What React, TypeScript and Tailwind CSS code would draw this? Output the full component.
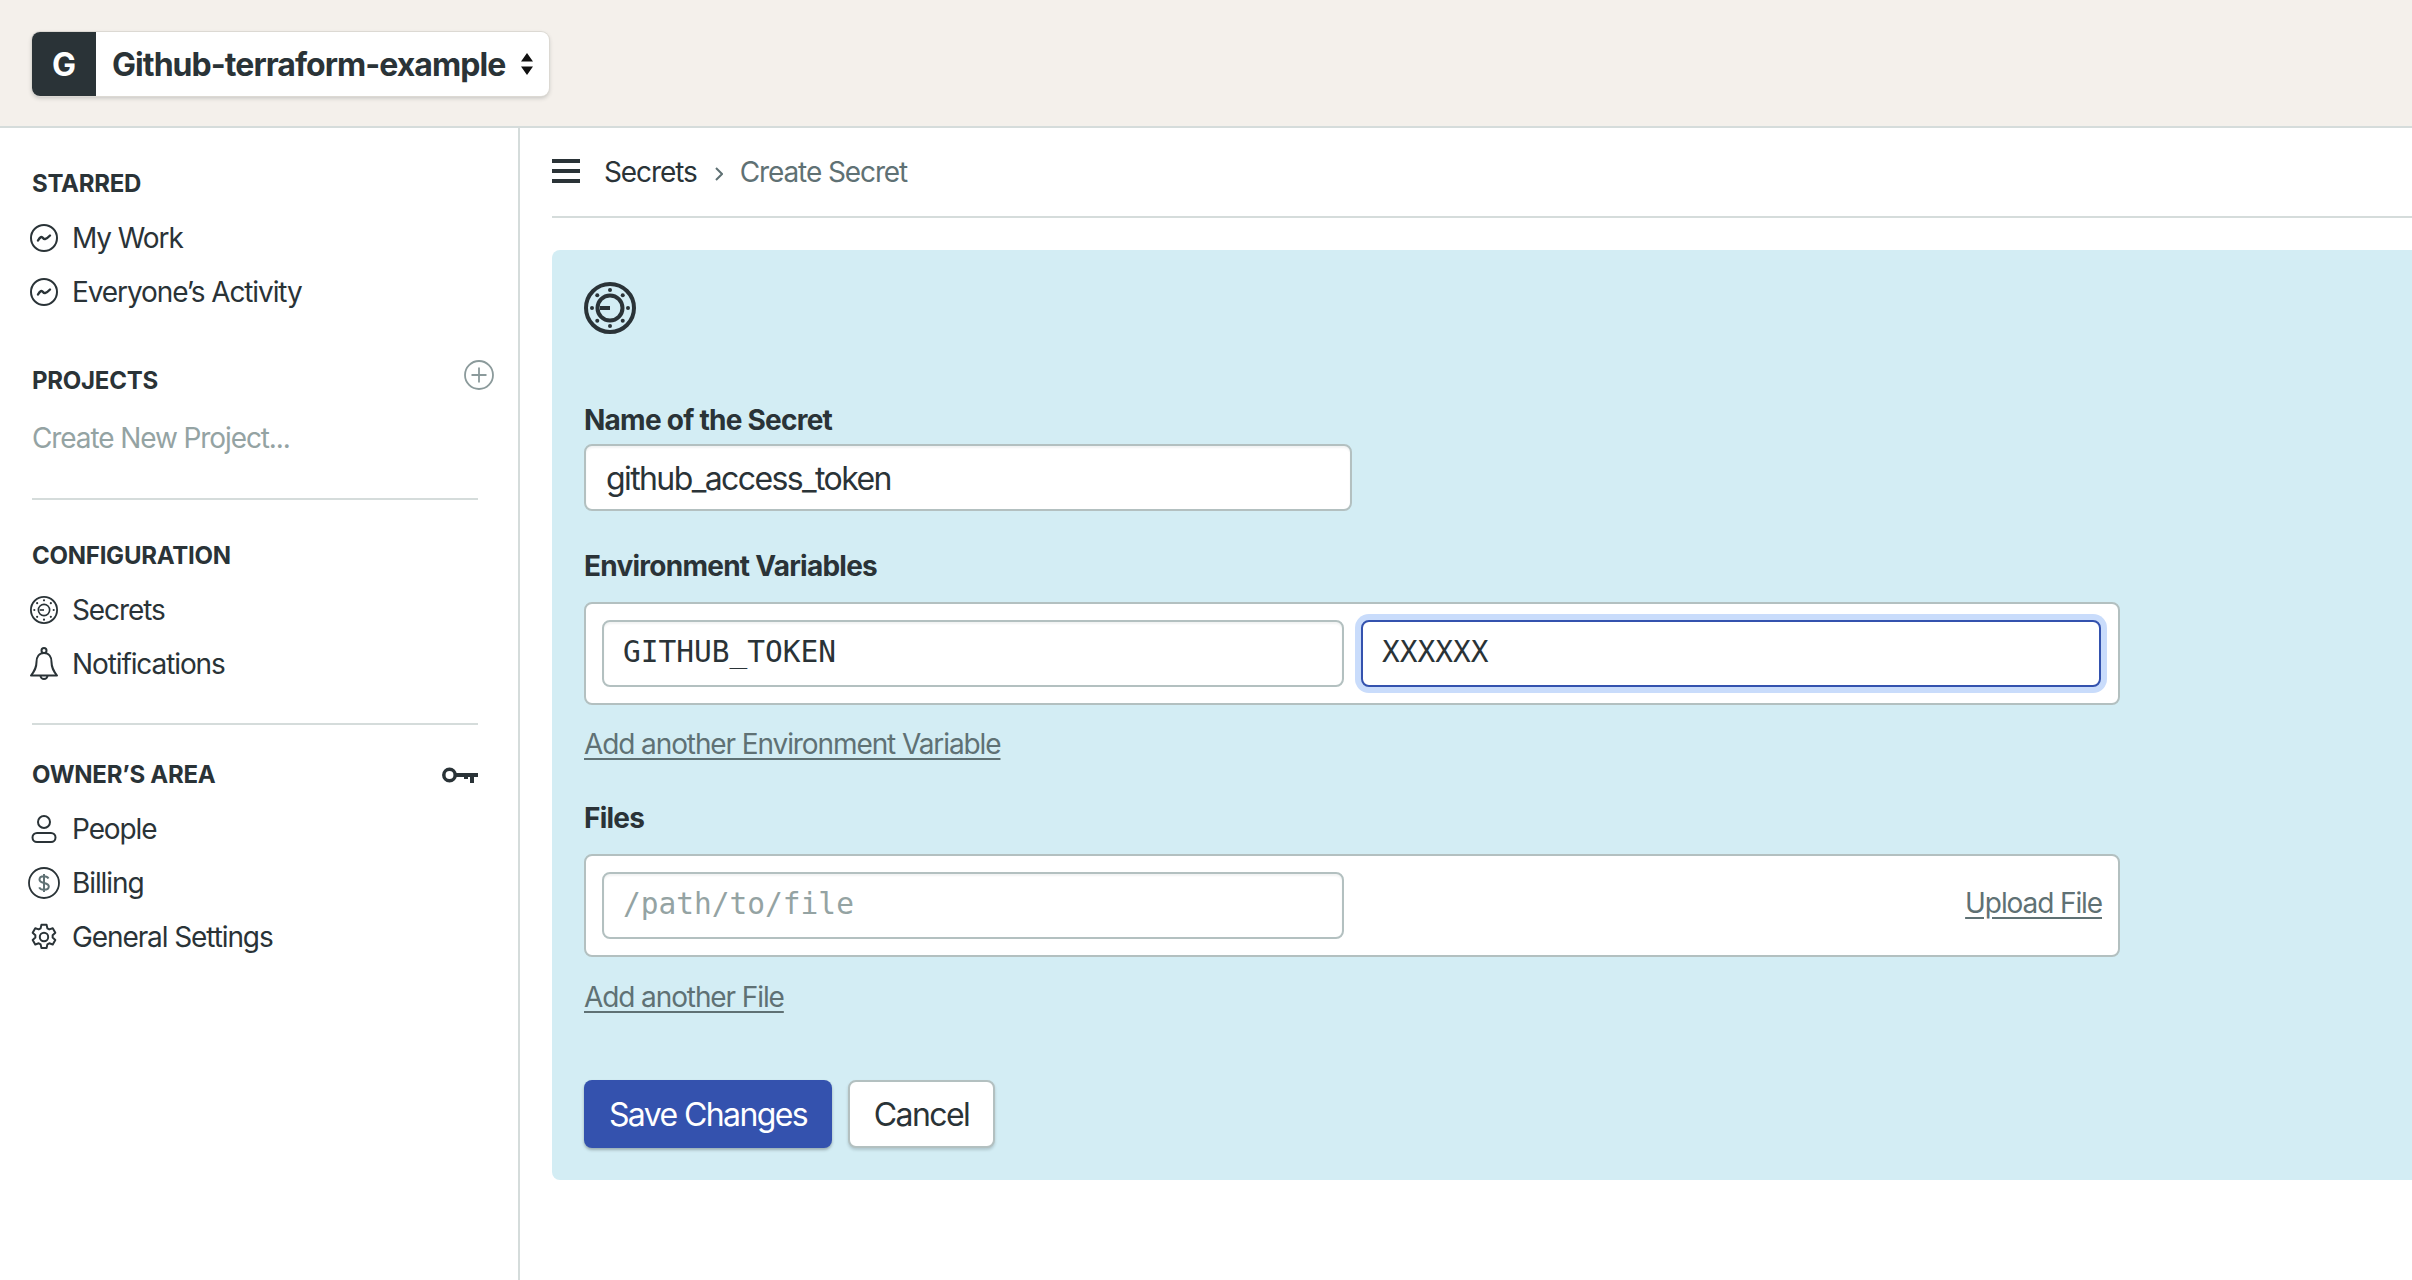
import { ReactNode } from "react";

const stroke = "#2a3337";

function Icon({ size = 28, children }: { size?: number; children: ReactNode }) {
  return (
    <svg width={size} height={size} viewBox="0 0 28 28" fill="none" stroke={stroke} strokeWidth="2" className="shrink-0">
      {children}
    </svg>
  );
}

function ActivityIcon() {
  return (
    <Icon>
      <circle cx="14" cy="14" r="13" />
      <path d="M8 16.500c2.300-4 3.700-4.300 5-2.500s3 1.600 7-2.500" strokeWidth="2.400" strokeLinecap="round" />
    </Icon>
  );
}

function SafeIcon({ size = 28 }: { size?: number }) {
  const small = size < 40;
  const dots = [0, 45, 90, 135, 180, 225, 270, 315];
  return (
    <svg width={size} height={size} viewBox="0 0 52 52" fill="none" stroke={stroke} strokeWidth={small ? 3.4 : 4} className="shrink-0">
      <circle cx="26" cy="26" r={small ? 24.300 : 24} />
      <circle cx="26" cy="26" r={small ? 10.500 : 12.500} strokeWidth={small ? 3 : 4} />
      <path d={small ? "M26 26h-8" : "M26 26h-10"} strokeWidth={small ? 3 : 4} />
      {dots.map((a) => (
        <circle
          key={a}
          cx={26 + 18 * Math.cos((a * Math.PI) / 180)}
          cy={26 + 18 * Math.sin((a * Math.PI) / 180)}
          r="2"
          fill={stroke}
          stroke="none"
        />
      ))}
    </svg>
  );
}

function BellIcon() {
  return (
    <svg width="28" height="34" viewBox="0 0 28 34" fill="none" stroke={stroke} strokeWidth="2" className="shrink-0">
      <circle cx="14" cy="3.500" r="2.500" />
      <path d="M14 6c-5 0-7.500 4-7.500 9 0 6-2 9-5.500 13.500h26c-3.500-4.500-5.500-7.500-5.500-13.500 0-5-2.500-9-7.500-9z" strokeLinejoin="round" />
      <path d="M10.500 28.500a3.500 3.500 0 0 0 7 0" />
    </svg>
  );
}

function PersonIcon() {
  return (
    <Icon>
      <circle cx="14" cy="7" r="6" />
      <rect x="2.500" y="18" width="23" height="9" rx="4.500" />
    </Icon>
  );
}

function BillingIcon() {
  return (
    <svg width="32" height="32" viewBox="0 0 32 32" fill="none" stroke={stroke} strokeWidth="1.800" className="shrink-0">
      <circle cx="16" cy="16" r="15" />
      <path d="M20.500 11.500c-.8-1.500-2.500-2.200-4.500-2.200-2.500 0-4.500 1.200-4.500 3.300 0 4.600 9.300 2.300 9.300 7 0 2.100-2.200 3.200-4.800 3.200-2.200 0-4-.8-4.800-2.400M16 7v18" stroke="#5f7174" strokeWidth="2" />
    </svg>
  );
}

function GearIcon() {
  return (
    <svg width="28" height="28" viewBox="0 0 24 24" fill="none" stroke={stroke} strokeWidth="1.700" strokeLinejoin="round" className="shrink-0">
      <path d="M9.800 1.500h4.400l.7 3.100 1.600.9 3-1 2.200 3.800-2.300 2.200v1.900l2.300 2.100-2.200 3.900-3-1-1.600.9-.7 3.100H9.800l-.7-3.100-1.600-.9-3 1-2.200-3.900 2.300-2.100v-1.900L2.300 8.300l2.200-3.800 3 1 1.600-.9z" />
      <circle cx="12" cy="12" r="3.600" />
    </svg>
  );
}

function KeyIcon() {
  return (
    <svg width="36" height="16" viewBox="0 0 36 16" fill="none" className="mt-[2px] shrink-0">
      <circle cx="7.500" cy="8" r="5.700" stroke={stroke} strokeWidth="3.500" />
      <path d="M14 6h22v4h-4v6h-4v-6h-2v2h-4v-2H14z" fill={stroke} />
    </svg>
  );
}

function SectionTitle({ children, className }: { children: ReactNode; className: string }) {
  return <h3 className={`h-7 text-[24px] leading-[30px] font-bold tracking-[-0.25px] text-[#2a3337] ${className}`}>{children}</h3>;
}

function NavItem({ icon, label }: { icon: ReactNode; label: string }) {
  return (
    <a className="flex h-[54px] items-center text-[28px] tracking-[-1.1px] text-[#2a3337]">
      <span className="-ml-[4px] mr-[3px] flex w-[41px] justify-center pr-[10px]">{icon}</span>
      {label}
    </a>
  );
}

function Sidebar() {
  return (
    <aside className="w-[520px] shrink-0 border-r-2 border-[#d5dcdb] pl-8 pr-[40px] pt-[41px]">
      <SectionTitle className="mb-[14px]">STARRED</SectionTitle>
      <NavItem icon={<ActivityIcon />} label="My Work" />
      <NavItem icon={<ActivityIcon />} label="Everyone’s Activity" />

      <div className="mt-[47px] flex items-start justify-between">
        <SectionTitle className="">PROJECTS</SectionTitle>
        <svg width="30" height="30" viewBox="0 0 30 30" fill="none" stroke="#8b9a9b" strokeWidth="1.800" className="-mr-[16px] -mt-[6px]">
          <circle cx="15" cy="15" r="14" />
          <path d="M15 7.500v15M7.500 15h15" />
        </svg>
      </div>
      <p className="mt-[17px] flex h-[54px] items-center text-[28px] tracking-[-1.1px] text-[#94a3a3]">Create New Project...</p>

      <div className="mt-[33px] h-0.5 bg-[#d5dcdb]" />

      <SectionTitle className="mt-[41px] mb-[14px]">CONFIGURATION</SectionTitle>
      <NavItem icon={<SafeIcon />} label="Secrets" />
      <NavItem icon={<BellIcon />} label="Notifications" />

      <div className="mt-[32px] h-0.5 bg-[#d5dcdb]" />

      <div className="mt-[35px] mb-[14px] flex items-center justify-between">
        <SectionTitle className="">OWNER’S AREA</SectionTitle>
        <KeyIcon />
      </div>
      <NavItem icon={<PersonIcon />} label="People" />
      <NavItem icon={<BillingIcon />} label="Billing" />
      <NavItem icon={<GearIcon />} label="General Settings" />
    </aside>
  );
}

const fieldClass =
  "h-[67px] rounded-lg border-2 border-[#b3c0c0] bg-white text-[#2a3337] outline-none shadow-[inset_0_2px_2px_rgba(42,51,55,0.06)]";
const monoClass = "px-[19px] pb-[3px] font-['DejaVu_Sans_Mono',monospace] text-[29.5px] placeholder:text-[#94a3a3]";

function FieldLabel({ children, className }: { children: ReactNode; className: string }) {
  return <label className={`block h-7 text-[28px] leading-7 font-bold tracking-[-0.75px] text-[#2a3337] ${className}`}>{children}</label>;
}

function TextLink({ children, className = "" }: { children: ReactNode; className?: string }) {
  return <a className={`text-[28px] leading-7 tracking-[-1.1px] text-[#5f7174] underline underline-offset-4 ${className}`}>{children}</a>;
}

function SecretForm() {
  return (
    <section className="mt-8 h-[930px] rounded-l-lg bg-[#d3edf4] pl-8 pt-8">
      <SafeIcon size={52} />

      <FieldLabel className="mt-[72px] mb-[10px]">Name of the Secret</FieldLabel>
      <input readOnly value="github_access_token" className={`${fieldClass} block w-[768px] px-5 pt-[2px] text-[32px] tracking-[-1.6px]`} />

      <FieldLabel className="mt-[41px] mb-[22px]">Environment Variables</FieldLabel>
      <div className="flex h-[103px] w-[1536px] items-center gap-[17px] rounded-lg border-2 border-[#b3c0c0] bg-white px-4">
        <input readOnly value="GITHUB_TOKEN" className={`${fieldClass} ${monoClass} w-[742px]`} />
        <input
          readOnly
          value="XXXXXX"
          className={`h-[67px] w-[740px] rounded-lg border-2 border-[#3452ae] bg-white text-[#2a3337] outline-none shadow-[0_0_0_6px_#c9dcfb] ${monoClass}`}
        />
      </div>
      <div className="mt-[25px] h-7">
        <TextLink>Add another Environment Variable</TextLink>
      </div>

      <FieldLabel className="mt-[46px] mb-[22px]">Files</FieldLabel>
      <div className="flex h-[103px] w-[1536px] items-center justify-between rounded-lg border-2 border-[#b3c0c0] bg-white px-4">
        <input readOnly placeholder="/path/to/file" className={`${fieldClass} ${monoClass} w-[742px]`} />
        <TextLink className="-mt-[5px]">Upload File</TextLink>
      </div>
      <div className="mt-[26px] h-7">
        <TextLink>Add another File</TextLink>
      </div>

      <div className="mt-[69px] flex gap-[16px]">
        <button className="h-[68px] w-[248px] rounded-lg bg-[#3452ae] pt-[2px] text-[32px] tracking-[-1.6px] text-white shadow-[0_2px_3px_rgba(42,51,55,0.35)]">
          Save Changes
        </button>
        <button className="h-[68px] w-[147px] rounded-lg border-2 border-[#b3c0c0] bg-white pt-[2px] text-[32px] tracking-[-1.6px] text-[#2a3337] shadow-[0_2px_3px_rgba(42,51,55,0.2)]">
          Cancel
        </button>
      </div>
    </section>
  );
}

export default function App() {
  return (
    <div className="flex h-[1280px] flex-col overflow-hidden bg-white font-['Inter',sans-serif]">
      <header className="h-[128px] shrink-0 border-b-2 border-[#d5dcdb] bg-[#f4f0eb] pl-8 pt-8">
        <div className="flex h-16 w-[517px] items-center overflow-hidden rounded-lg bg-white shadow-[0_0_0_1px_#dcd9d3,0_2px_4px_rgba(42,51,55,0.25)]">
          <span className="flex h-16 w-16 items-center justify-center bg-[#2a3337] pt-px text-[32px] font-bold text-white">G</span>
          <span className="ml-4 pt-0.5 text-[32px] font-bold tracking-[-0.95px] text-[#2a3337]">Github-terraform-example</span>
          <svg width="12" height="22" viewBox="0 0 12 22" fill="#111" className="ml-auto mr-[16px]">
            <path d="M6 0l6 8.500H0zM6 22L0 13.500h12z" />
          </svg>
        </div>
      </header>

      <div className="flex min-h-0 flex-1">
        <Sidebar />
        <main className="min-w-0 flex-1 pl-8">
          <nav className="flex h-[90px] items-center border-b-2 border-[#d5dcdb] text-[28px] tracking-[-1.1px]">
            <svg width="28" height="24" viewBox="0 0 28 24" fill={stroke} className="-mt-0.5">
              <rect width="28" height="4" />
              <rect y="10" width="28" height="4" />
              <rect y="20" width="28" height="4" />
            </svg>
            <span className="ml-6 text-[#2a3337]">Secrets</span>
            <svg width="8" height="14" viewBox="0 0 8 14" fill="none" stroke="#5f7174" strokeWidth="2" className="ml-[18px] mt-1">
              <path d="M1 1l6 6-6 6" />
            </svg>
            <span className="ml-[17px] text-[#5f7174]">Create Secret</span>
          </nav>
          <SecretForm />
        </main>
      </div>
    </div>
  );
}
